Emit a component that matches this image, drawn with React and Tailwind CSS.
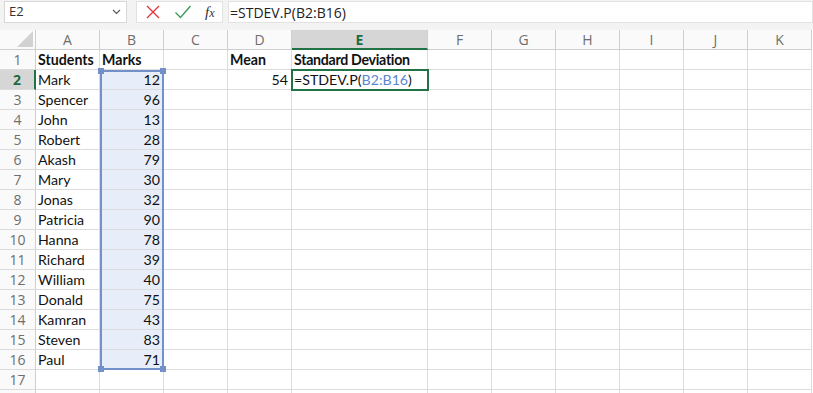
import React from "react";

const cols = ["A", "B", "C", "D", "E", "F", "G", "H", "I", "J", "K"];
const widths = [64, 64, 64, 64, 136, 64, 64, 64, 64, 64, 64];
const data = [
  ["Mark", 12],
  ["Spencer", 96],
  ["John", 13],
  ["Robert", 28],
  ["Akash", 79],
  ["Mary", 30],
  ["Jonas", 32],
  ["Patricia", 90],
  ["Hanna", 78],
  ["Richard", 39],
  ["William", 40],
  ["Donald", 75],
  ["Kamran", 43],
  ["Steven", 83],
  ["Paul", 71],
];

const cellFont = { fontFamily: "Lato, 'Open Sans', sans-serif" };

function Cell({ children, className = "", w }) {
  return (
    <div
      className={`h-[20px] shrink-0 border-r border-b border-[#dcdcdc] overflow-visible whitespace-nowrap text-[14.2px] leading-[20px] text-[#111] ${className}`}
      style={{ width: w }}
    >
      {children}
    </div>
  );
}

export default function App() {
  const rows = [];
  for (let r = 1; r <= 18; r++) {
    const cells = [];
    for (let c = 0; c < 11; c++) {
      let content = null;
      let cls = "px-[2px]";
      if (r === 1 && c === 0) { content = "Students"; cls += " font-bold"; }
      if (r === 1 && c === 1) { content = "Marks"; cls += " font-bold"; }
      if (r === 1 && c === 3) { content = "Mean"; cls += " font-bold"; }
      if (r === 1 && c === 4) { content = <span className="tracking-[-0.3px]">Standard Deviation</span>; cls += " font-bold"; }
      if (r >= 2 && r <= 16 && c === 0) content = data[r - 2][0];
      if (r >= 2 && r <= 16 && c === 1) { content = data[r - 2][1]; cls += " text-right pr-[3px] bg-[#e8eef9]"; }
      if (r === 2 && c === 3) { content = "54"; cls += " text-right pr-[3px]"; }
      if (r === 2 && c === 4) {
        content = (
          <span>
            =STDEV.P(<span className="text-[#5b86d0]">B2:B16</span>)
          </span>
        );
      }
      cells.push(
        <Cell key={c} w={widths[c]} className={cls}>
          {content}
        </Cell>
      );
    }
    const active = r === 2;
    rows.push(
      <div key={r} className="flex">
        <div
          className={`w-[36px] h-[20px] shrink-0 border-b border-[#dcdcdc] flex items-center justify-center text-[14px] ${
            active
              ? "bg-[#d6d6d6] text-[#1e6b3c] font-bold border-r-2 border-r-[#217346]"
              : "bg-[#fafafa] text-[#6e6e6e] border-r border-r-[#cfcfcf]"
          }`}
          style={{ fontFamily: "'Open Sans', sans-serif" }}
        >
          {r <= 17 ? r : ""}
        </div>
        {cells}
      </div>
    );
  }

  return (
    <div className="w-[813px] h-[393px] overflow-hidden bg-white relative" style={cellFont}>
      {/* formula bar */}
      <div className="h-[30px] bg-[#f3f3f3] flex items-start pt-[1px] gap-[9px] pl-[4px]" style={{ fontFamily: "'Open Sans', sans-serif" }}>
        <div className="w-[123px] h-[22px] bg-white border border-[#d8d8d8] flex items-center justify-between pl-[4px] pr-[5px] text-[13px] text-[#333]">
          <span>E2</span>
          <svg width="9" height="6" viewBox="0 0 9 6" fill="none" stroke="#555" strokeWidth="1.1">
            <path d="M1 1l3.5 3.5L8 1" />
          </svg>
        </div>
        <div className="w-[87px] h-[22px] bg-white border border-[#e2e2e2] flex items-center pl-[8px] gap-[13px]">
          <svg width="16" height="16" viewBox="0 0 16 16" fill="none" stroke="#e0383e" strokeWidth="1.4">
            <path d="M2 2l12 12M14 2L2 14" />
          </svg>
          <svg width="18" height="16" viewBox="0 0 18 16" fill="none" stroke="#3a9a5b" strokeWidth="1.4">
            <path d="M1.5 8.5l5 5L16.5 2" />
          </svg>
          <span className="italic text-[15px] text-[#333] leading-none" style={{ fontFamily: "'Liberation Serif', serif" }}>
            f<span className="text-[12px]">x</span>
          </span>
        </div>
        <div className="flex-1 h-[22px] bg-white border border-[#e2e2e2] -ml-[4px] flex items-center pl-[1px] text-[14px] text-[#222]">
          =STDEV.P(B2:B16)
        </div>
      </div>

      {/* column headers */}
      <div className="flex h-[20px]" style={{ fontFamily: "'Open Sans', sans-serif" }}>
        <div className="w-[36px] h-[20px] shrink-0 bg-[#fafafa] border-r border-b border-[#cfcfcf] flex items-end justify-end pr-[2px] pb-[2px]">
          <svg width="16" height="16" viewBox="0 0 16 16">
            <path d="M16 0L16 16L0 16Z" fill="#d2d2d2" />
          </svg>
        </div>
        {cols.map((c, i) => (
          <div
            key={c}
            className={`h-[20px] shrink-0 flex items-center justify-center text-[14px] ${
              c === "E"
                ? "bg-[#d6d6d6] text-[#1e6b3c] font-bold border-b-2 border-b-[#217346] border-r border-r-[#cfcfcf]"
                : "bg-[#fafafa] text-[#6e6e6e] border-r border-b border-[#cfcfcf]"
            }`}
            style={{ width: widths[i] }}
          >
            {c}
          </div>
        ))}
      </div>

      {rows}

      {/* selection range B2:B16 */}
      <div className="absolute left-[100px] top-[70px] w-[64px] h-[300px] border-2 border-[#7391c9] pointer-events-none">
        <div className="absolute -left-[4px] -top-[4px] w-[6px] h-[6px] bg-[#7391c9]" />
        <div className="absolute -right-[4px] -top-[4px] w-[6px] h-[6px] bg-[#7391c9]" />
        <div className="absolute -left-[4px] -bottom-[4px] w-[6px] h-[6px] bg-[#7391c9]" />
        <div className="absolute -right-[4px] -bottom-[4px] w-[6px] h-[6px] bg-[#7391c9]" />
      </div>
      {/* active cell E2 */}
      <div className="absolute left-[291px] top-[69px] w-[138px] h-[22px] border-2 border-[#217346] pointer-events-none" />
    </div>
  );
}
